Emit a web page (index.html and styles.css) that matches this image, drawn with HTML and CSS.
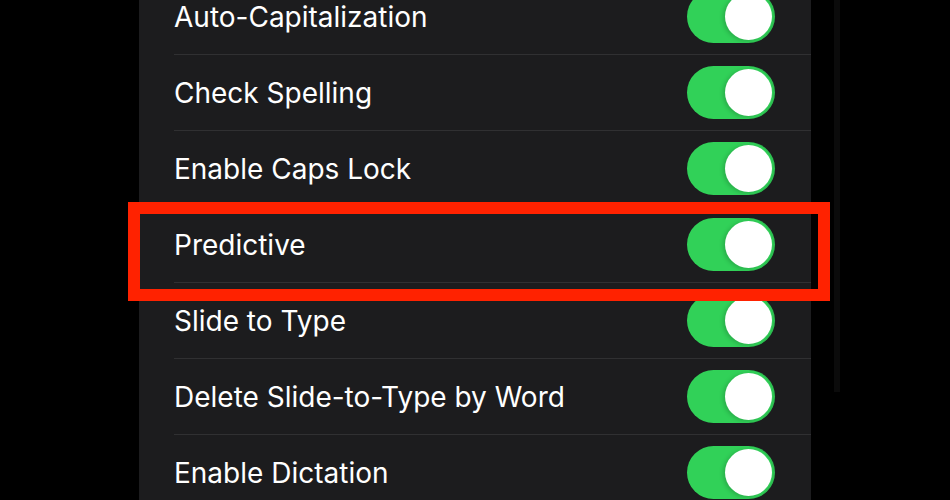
FILE: index.html
```html
<!DOCTYPE html>
<html lang="en">
<head>
<meta charset="utf-8">
<title>Keyboard Settings</title>
<link rel="stylesheet" href="styles.css">
</head>
<body>
<div class="screen">
  <div class="panel">
    <div class="row"><div class="row-inner"><span class="label">Auto-Capitalization</span><span class="toggle"><span class="knob"></span></span></div></div>
    <div class="row"><div class="row-inner"><span class="label">Check Spelling</span><span class="toggle"><span class="knob"></span></span></div></div>
    <div class="row"><div class="row-inner"><span class="label">Enable Caps Lock</span><span class="toggle"><span class="knob"></span></span></div></div>
    <div class="row"><div class="row-inner"><span class="label">Predictive</span><span class="toggle"><span class="knob"></span></span></div></div>
    <div class="row"><div class="row-inner"><span class="label">Slide to Type</span><span class="toggle"><span class="knob"></span></span></div></div>
    <div class="row"><div class="row-inner"><span class="label">Delete Slide-to-Type by Word</span><span class="toggle"><span class="knob"></span></span></div></div>
    <div class="row"><div class="row-inner"><span class="label">Enable Dictation</span><span class="toggle"><span class="knob"></span></span></div></div>
  </div>
  <div class="edge"></div>
</div>
<div class="highlight"></div>
</body>
</html>
```
FILE: styles.css
```css
html, body {
  margin: 0;
  padding: 0;
  background: #000;
  width: 950px;
  height: 500px;
  overflow: hidden;
}
body {
  position: relative;
  font-family: Inter, "Noto Sans", sans-serif;
}
.screen {
  display: flex;
  align-items: flex-start;
}
.panel {
  margin-left: 139px;
  margin-top: -21px;
  width: 672px;
  background: #1c1c1e;
}
.row {
  padding-left: 35px;
}
.row-inner {
  height: 75px;
  border-bottom: 1px solid #303032;
  display: flex;
  align-items: center;
  justify-content: space-between;
  padding-right: 36px;
}
.label {
  color: #fff;
  font-size: 28px;
  padding-top: 1px;
}
.toggle {
  width: 88px;
  height: 53px;
  border-radius: 27px;
  background: #31d158;
  position: relative;
  box-shadow: inset -2px 0 0 rgba(0,0,0,0.08);
}
.knob {
  position: absolute;
  right: 3px;
  top: 3px;
  width: 47px;
  height: 47px;
  border-radius: 50%;
  background: #fff;
  box-shadow: -2px 1px 4px rgba(0,0,0,0.18);
}
.edge {
  margin-left: 23px;
  width: 6px;
  height: 392px;
  background: #0b0b0b;
}
.highlight {
  position: absolute;
  left: 128px;
  top: 202px;
  width: 678px;
  height: 75px;
  border: 12px solid #ff2200;
}
```
